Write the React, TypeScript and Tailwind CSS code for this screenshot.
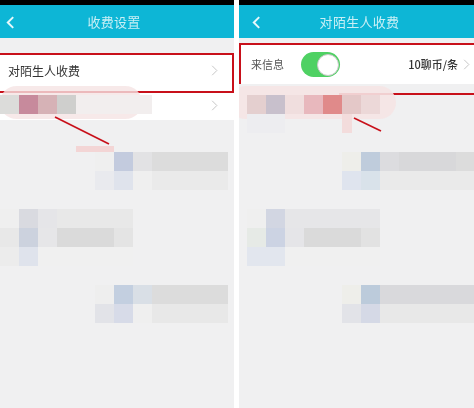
const FONT = "font-['Noto_Sans_CJK_SC','Noto_Sans',sans-serif]"

// one blurred patch: each string is a row of cells, one cell per class
function Mosaic({ className, cells }: { className: string; cells: string[] }) {
  return (
    <div className={`absolute grid auto-rows-[19px] grid-cols-[repeat(12,19px)] ${className}`}>
      {cells.map((c, i) => (
        <div key={i} className={c} />
      ))}
    </div>
  )
}

function Chevron({ className }: { className: string }) {
  return (
    <svg viewBox="0 0 8 14" className={className} fill="none" stroke="currentColor" strokeWidth="1.2">
      <path d="M1 1l6 6-6 6" />
    </svg>
  )
}

function Header({ title, backClass, titleClass }: { title: string; backClass: string; titleClass: string }) {
  return (
    <>
      <div className="h-[5px] bg-black" />
      <div className={`relative flex h-[33px] items-center justify-center bg-[#0db6d6] ${titleClass}`}>
        <svg viewBox="0 0 10 14" className={`absolute top-[11px] h-[13px] w-[9px] text-[#e6f8fb] ${backClass}`} fill="none" stroke="currentColor" strokeWidth="2.2">
          <path d="M8 1L2 7l6 6" />
        </svg>
        <span className="text-[13px] tracking-[0.3px] text-[#c9eff5] blur-[0.3px]">{title}</span>
      </div>
    </>
  )
}

function LeftPanel() {
  return (
    <div className="relative flex h-full w-[234px] flex-col overflow-hidden bg-[#f0f0f1]">
      <Header title="收费设置" backClass="left-[6px]" titleClass="pr-[6px]" />
      <div className="mt-[15px] flex h-[40px] items-center justify-between border-2 border-l-0 border-[#c8101a] bg-white pb-[5px] pl-[8px] pr-[14px]">
        <span className="text-[12px] text-[#333] blur-[0.3px]">对陌生人收费</span>
        <Chevron className="h-[11px] w-[7px] text-[#c4c4c4]" />
      </div>
      <div className="flex h-[27px] items-center justify-end bg-white pb-[3px] pr-[16px]">
        <Chevron className="h-[11px] w-[7px] text-[#c4c4c4]" />
      </div>

      <div className="absolute left-0 top-[86px] h-[33px] w-[142px] rounded-full bg-[#f5e4e4]/80" />
      <Mosaic
        className="left-0 top-[95px]"
        cells={['bg-[#dcdcda]', 'bg-[#c78a9c]', 'bg-[#d6b2b6]', 'bg-[#cfcfcd]', 'col-span-4 bg-[#f2eeee]']}
      />
      <svg viewBox="0 0 234 408" className="absolute inset-0 h-[408px] w-[234px]">
        <path d="M55 117l54 27" stroke="#c8101a" strokeWidth="1.6" />
      </svg>

      <div className="absolute left-[76px] top-[146px] h-[6px] w-[38px] bg-[#f3d5d5]" />
      <Mosaic
        className="left-[95px] top-[152px]"
        cells={[
          'bg-[#efefef]', 'bg-[#c3cbde]', 'bg-[#e2e2e4]', 'col-span-4 bg-[#dcdcdc]',
          'col-start-1 bg-[#e9eaee]', 'bg-[#dfe3ec]', 'bg-[#efefef]', 'col-span-4 bg-[#eaeaea]',
        ]}
      />
      <Mosaic
        className="left-0 top-[209px]"
        cells={[
          'bg-[#efefef]', 'bg-[#d9dae0]', 'bg-[#e5e5e8]', 'col-span-4 bg-[#e8e8e8]', 'col-start-1 bg-[#e8e8e8]',
          'bg-[#ccd2de]', 'bg-[#e6e6e8]', 'col-span-3 bg-[#dadada]', 'bg-[#e4e4e4]',
          'col-start-1 bg-[#ececec]', 'bg-[#dfe3ec]', 'col-span-5 bg-[#f0f0f0]',
        ]}
      />
      <Mosaic
        className="left-[95px] top-[285px]"
        cells={[
          'bg-[#eeeeee]', 'bg-[#c3cfe0]', 'bg-[#d9dfe6]', 'col-span-4 bg-[#dcdcdc]',
          'col-start-1 bg-[#e2e3e8]', 'bg-[#d7dbe8]', 'bg-[#efefef]', 'col-span-4 bg-[#e8e8e8]',
        ]}
      />
    </div>
  )
}

function RightPanel() {
  return (
    <div className="relative flex h-full flex-1 flex-col overflow-hidden bg-[#f0f0f1]">
      <Header title="对陌生人收费" backClass="left-[13px]" titleClass="pl-[6px]" />
      <div className="mt-[5px] flex h-[41px] items-center border-l-2 border-t-2 border-[#c8101a] bg-white pl-[10px] pr-[4px]">
        <span className="text-[11px] text-[#555] blur-[0.3px]">来信息</span>
        <div className="ml-[17px] flex h-[25px] w-[39px] items-center justify-end rounded-full bg-[#4fd163] pr-[1px]">
          <div className="h-[22px] w-[22px] rounded-full border border-[#c9c9c9] bg-white" />
        </div>
        <span className="ml-auto text-[11px] font-medium text-[#333] blur-[0.3px]">10聊币/条</span>
        <Chevron className="ml-[5px] h-[11px] w-[7px] text-[#c4c4c4]" />
      </div>

      <div className="absolute left-[100px] top-[93px] h-[2px] w-[135px] bg-[#c8101a]" />
      <div className="absolute left-[-10px] top-[86px] h-[33px] w-[167px] rounded-full bg-[#f5e4e4]/90" />
      <Mosaic
        className="left-[8px] top-[95px]"
        cells={[
          'bg-[#e4cfcf]', 'bg-[#c8c0cc]', 'bg-[#f0dede]', 'bg-[#e8b8bd]', 'bg-[#e08a8a]', 'bg-[#e4c8c8]', 'bg-[#ecd8d8]',
          'col-span-2 col-start-1 bg-[#ededf0]', 'col-start-6 w-[10px] bg-[#f3dcdc]',
        ]}
      />
      <svg viewBox="0 0 235 408" className="absolute inset-0 h-[408px] w-[235px]">
        <path d="M115 118l27 13" stroke="#c8101a" strokeWidth="1.6" />
      </svg>

      <Mosaic
        className="left-[103px] top-[152px]"
        cells={[
          'bg-[#eeeeea]', 'bg-[#bfccdc]', 'bg-[#dcdcdf]', 'col-span-3 bg-[#d8d8da]', 'bg-[#dcdcdc]',
          'col-start-1 bg-[#dfe4ee]', 'bg-[#d9e2ea]', 'col-span-5 bg-[#eaeaea]',
        ]}
      />
      <Mosaic
        className="left-[8px] top-[209px]"
        cells={[
          'bg-[#efefef]', 'bg-[#d2d6e2]', 'col-span-5 bg-[#e6e6e8]', 'col-start-1 bg-[#e6eae6]',
          'bg-[#ccd3e3]', 'bg-[#e5e5e8]', 'col-span-3 bg-[#dadada]', 'bg-[#e2e2e2]',
          'col-start-1 bg-[#e2e6ee]', 'bg-[#e2e6ee]', 'col-span-5 bg-[#f0f0f0]',
        ]}
      />
      <Mosaic
        className="left-[103px] top-[285px]"
        cells={[
          'bg-[#eeeeea]', 'bg-[#bccbdb]', 'col-span-5 bg-[#d9d9dc]',
          'col-start-1 bg-[#e2e3e8]', 'bg-[#d5d9e6]', 'col-span-5 bg-[#e8e8e8]',
        ]}
      />
    </div>
  )
}

export default function App() {
  return (
    <div className={`flex h-[408px] w-[474px] gap-[5px] overflow-hidden bg-white ${FONT}`}>
      <LeftPanel />
      <RightPanel />
    </div>
  )
}
